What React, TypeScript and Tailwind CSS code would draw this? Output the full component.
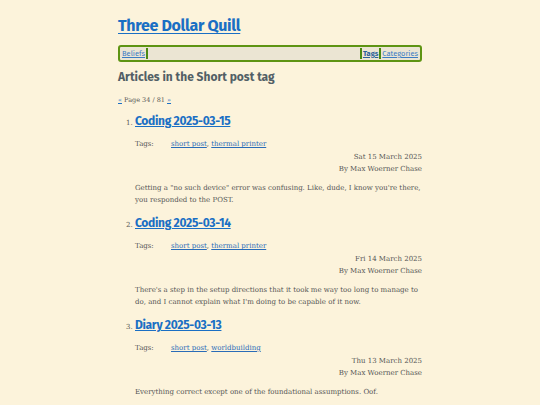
import React from "react";

const posts = [
  {
    title: "Coding 2025-03-15",
    tags: ["short post", "thermal printer"],
    date: "Sat 15 March 2025",
    summary:
      "Getting a \"no such device\" error was confusing. Like, dude, I know you're there, you responded to the POST.",
  },
  {
    title: "Coding 2025-03-14",
    tags: ["short post", "thermal printer"],
    date: "Fri 14 March 2025",
    summary:
      "There's a step in the setup directions that it took me way too long to manage to do, and I cannot explain what I'm doing to be capable of it now.",
  },
  {
    title: "Diary 2025-03-13",
    tags: ["short post", "worldbuilding"],
    date: "Thu 13 March 2025",
    summary: "Everything correct except one of the foundational assumptions. Oof.",
  },
];

const sans = "font-['Fira_Sans','Open_Sans','Liberation_Sans',sans-serif]";
const serif = "font-['Roboto_Slab','DejaVu_Serif','Liberation_Serif',serif]";

export default function App() {
  return (
    <div className={`min-h-[405px] bg-[#fcf3db] ${serif} text-[#555]`}>
      <div className="mx-auto w-[304px] pt-[15px]">
        <h1 className={`${sans} text-[16px] font-bold leading-[22px] tracking-[-0.3px]`}>
          <a href="#" className="text-[#1a6fc4] underline underline-offset-2">
            Three Dollar Quill
          </a>
        </h1>

        <nav
          className={`${sans} mt-[8px] flex h-[17px] items-center rounded-[3px] border-2 border-[#5e9413] bg-[#ebe5d3] px-[2px] text-[7.5px]`}
        >
          <a href="#" className="text-[#3c7cc4] underline">Beliefs</a>
          <span className="ml-[1px] h-[11px] w-[2px] bg-[#4a8a12]" />
          <span className="flex-1" />
          <span className="mr-[1px] h-[11px] w-[2px] bg-[#4a8a12]" />
          <a href="#" className="font-bold text-[#2a5f9a] underline">Tags</a>
          <span className="mx-[1px] h-[11px] w-[2px] bg-[#4a8a12]" />
          <a href="#" className="text-[#3c7cc4] underline">Categories</a>
        </nav>

        <h2 className={`${sans} mt-[7px] text-[12px] font-bold leading-[16px] text-[#525f66]`}>
          Articles in the Short post tag
        </h2>

        <p className="mt-[10px] text-[6.5px] leading-[10px]">
          <a href="#" className="text-[#1a6fc4] underline">«</a> Page 34 / 81{" "}
          <a href="#" className="text-[#1a6fc4] underline">»</a>
        </p>

        <ol className="mt-[7px] list-decimal pl-[17px] marker:text-[7px]">
          {posts.map((p) => (
            <li key={p.title} className="mb-[8px]">
              <h3 className={`${sans} text-[12px] font-bold leading-[18px] tracking-[-0.3px]`}>
                <a href="#" className="text-[#1a6fc4] underline underline-offset-1">
                  {p.title}
                </a>
              </h3>
              <div className="mt-[8px] flex text-[7px] leading-[12px]">
                <span className="w-[36px]">Tags:</span>
                <span>
                  {p.tags.map((t, i) => (
                    <React.Fragment key={t}>
                      {i > 0 && ", "}
                      <a href="#" className="text-[#2a6cb8] underline">{t}</a>
                    </React.Fragment>
                  ))}
                </span>
              </div>
              <div className="mt-[1px] text-right text-[7px] leading-[12px]">
                <div>{p.date}</div>
                <div>By Max Woerner Chase</div>
              </div>
              <p className="mt-[7px] text-[7px] leading-[12px]">{p.summary}</p>
            </li>
          ))}
        </ol>
      </div>
    </div>
  );
}
